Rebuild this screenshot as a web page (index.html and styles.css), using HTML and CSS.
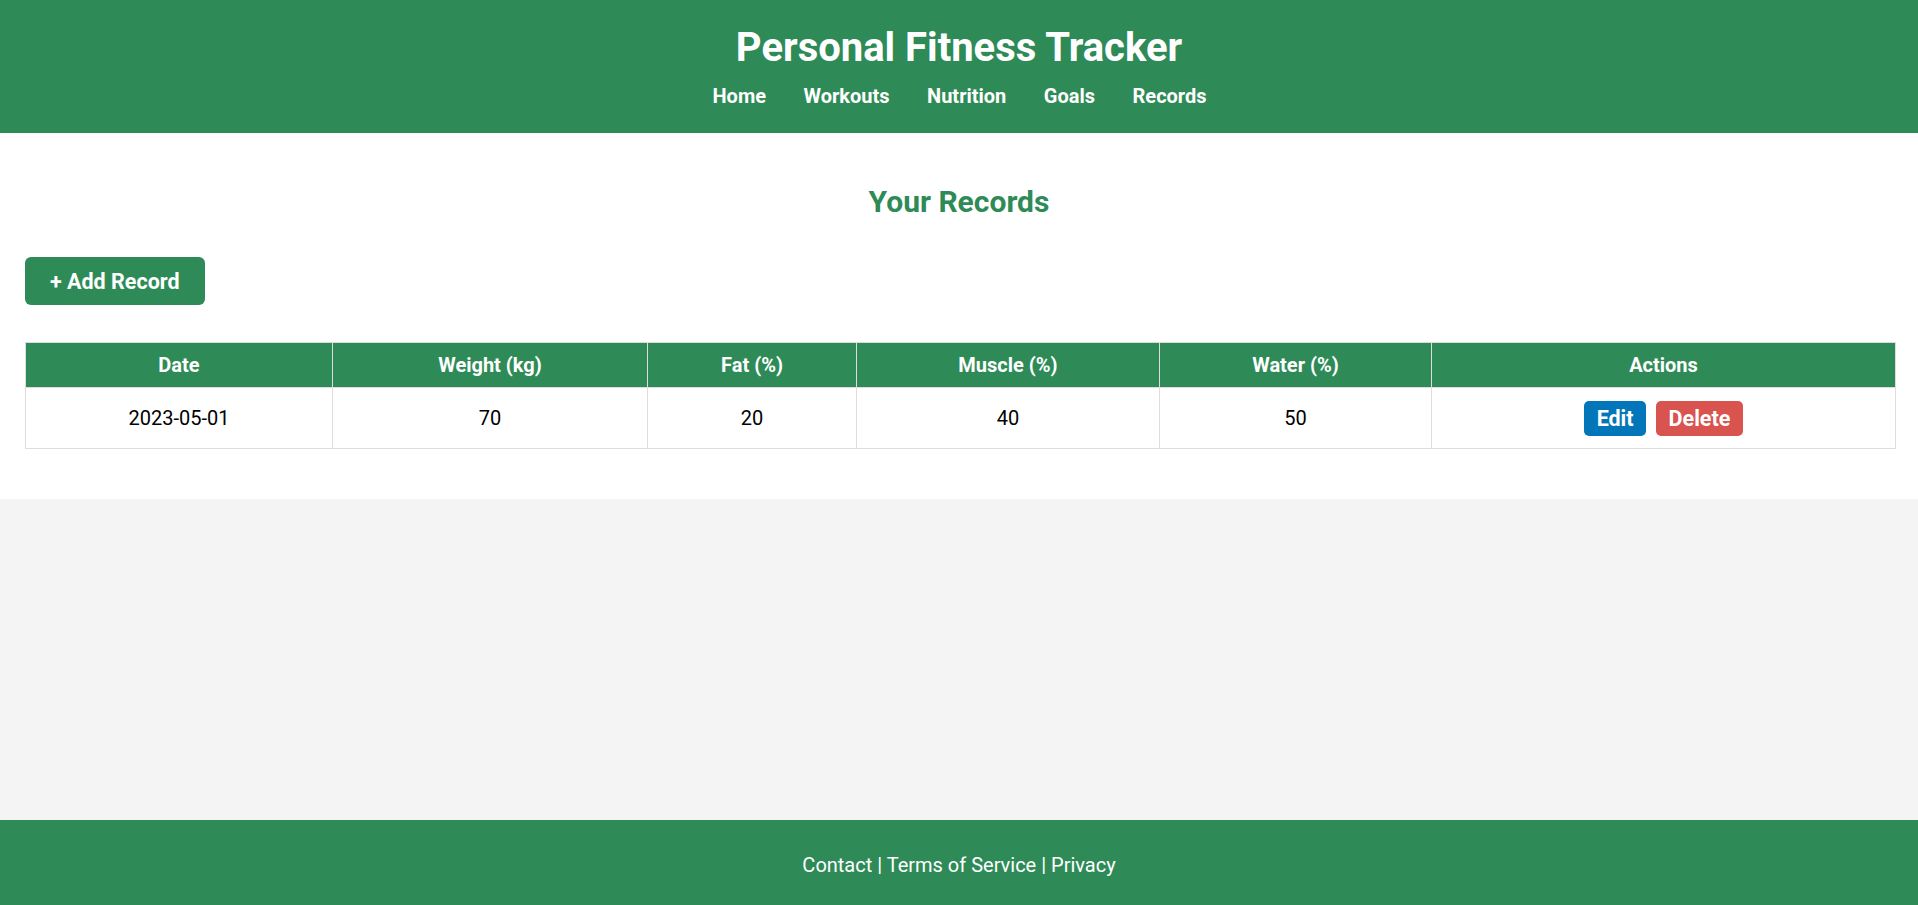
FILE: index.html
```html
<!DOCTYPE html>
<html lang="en">
<head>
<meta charset="UTF-8">
<title>Personal Fitness Tracker</title>
<link rel="stylesheet" href="styles.css">
</head>
<body>
<header class="site-header">
  <h1 class="site-title">Personal Fitness Tracker</h1>
  <nav class="site-nav">
    <a href="#" class="nav-link">Home</a>
    <a href="#" class="nav-link">Workouts</a>
    <a href="#" class="nav-link">Nutrition</a>
    <a href="#" class="nav-link">Goals</a>
    <a href="#" class="nav-link">Records</a>
  </nav>
</header>
<main class="content">
  <h2 class="section-title">Your Records</h2>
  <button class="btn-add">+ Add Record</button>
  <table class="records">
    <colgroup>
      <col class="col-date">
      <col class="col-weight">
      <col class="col-fat">
      <col class="col-muscle">
      <col class="col-water">
      <col class="col-actions">
    </colgroup>
    <thead>
      <tr>
        <th>Date</th>
        <th>Weight (kg)</th>
        <th>Fat (%)</th>
        <th>Muscle (%)</th>
        <th>Water (%)</th>
        <th>Actions</th>
      </tr>
    </thead>
    <tbody>
      <tr>
        <td>2023-05-01</td>
        <td>70</td>
        <td>20</td>
        <td>40</td>
        <td>50</td>
        <td>
          <div class="actions">
            <button class="btn-edit">Edit</button>
            <button class="btn-delete">Delete</button>
          </div>
        </td>
      </tr>
    </tbody>
  </table>
</main>
<footer class="site-footer">
  <p class="footer-text">Contact | Terms of Service | Privacy</p>
</footer>
</body>
</html>
```

FILE: styles.css
```css
html, body {
  margin: 0;
  padding: 0;
}

body {
  font-family: Roboto, "Liberation Sans", Arial, sans-serif;
  font-size: 20px;
  line-height: normal;
  color: #000;
  background: #f4f4f4;
  display: flex;
  flex-direction: column;
  min-height: 100vh;
}

.site-header {
  background: #2e8b57;
  color: #fff;
  text-align: center;
  padding: 24px 0 25px;
}

.site-title {
  margin: 0 0 13px;
  font-size: 40px;
  font-weight: 700;
  line-height: normal;
}

.site-nav {
  display: flex;
  justify-content: center;
  gap: 37.5px;
  padding-left: 1px;
}

.nav-link {
  color: #fff;
  text-decoration: none;
  font-weight: 700;
  font-size: 20px;
}

.content {
  background: #fff;
  padding: 25px 25px 50px;
}

.section-title {
  margin: 26px 0 38px;
  font-size: 30px;
  font-weight: 700;
  color: #2e8b57;
  text-align: center;
  line-height: normal;
}

.btn-add {
  font: inherit;
  font-size: 21.5px;
  font-weight: 700;
  background: #2e8b57;
  color: #fff;
  border: none;
  border-radius: 6px;
  padding: 11.5px 25px;
  line-height: normal;
  cursor: pointer;
}

.records {
  width: 100%;
  margin-top: 37px;
  border-collapse: collapse;
  table-layout: fixed;
  background: #fff;
}

.col-date { width: 307px; }
.col-weight { width: 315px; }
.col-fat { width: 209px; }
.col-muscle { width: 303px; }
.col-water { width: 272px; }
.col-actions { width: 464px; }

.records th,
.records td {
  border: 1px solid #ddd;
  text-align: center;
}

.records th {
  background: #2e8b57;
  color: #fff;
  font-weight: 700;
  padding: 10px;
}

.records td {
  padding: 12.5px;
}

.actions {
  display: flex;
  justify-content: center;
  gap: 10px;
}

.btn-edit,
.btn-delete {
  font: inherit;
  font-size: 21.5px;
  font-weight: 700;
  color: #fff;
  border: none;
  border-radius: 5px;
  padding: 5px 12.5px;
  line-height: normal;
  cursor: pointer;
}

.btn-edit {
  background: #0276b8;
}

.btn-delete {
  background: #d9534f;
}

.site-footer {
  margin-top: auto;
  background: #2e8b57;
  color: #fff;
  text-align: center;
  padding: 33px 0 28px;
}

.footer-text {
  margin: 0;
  font-size: 20px;
}
```
